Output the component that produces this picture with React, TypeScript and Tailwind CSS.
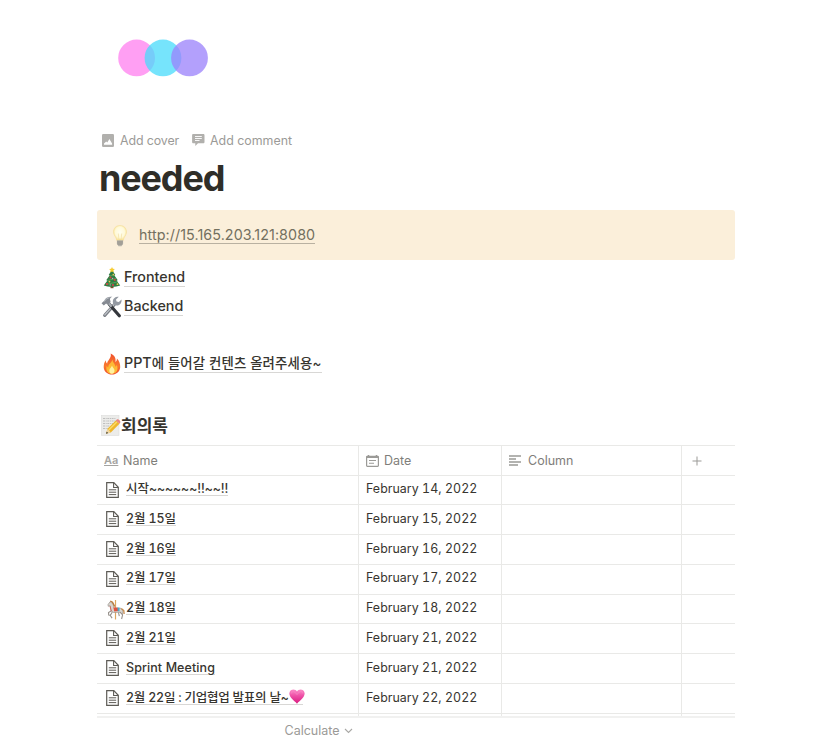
import type { ReactNode } from "react";

const FONT = "font-['Inter','Noto_Sans_CJK_KR',sans-serif]";

function Logo() {
  return (
    <svg width="92" height="38" viewBox="0 0 92 38" className="block">
      <circle cx="19.6" cy="18.9" r="18.4" fill="#ff9ff3" />
      <circle cx="46" cy="18.9" r="18.4" fill="#48dbfb" fillOpacity="0.75" />
      <circle cx="72.500" cy="18.900" r="18.400" fill="#9b82fb" fillOpacity="0.76" />
    </svg>
  );
}

function CoverIcon() {
  return (
    <svg width="12" height="13" viewBox="0 0 12 13" className="block">
      <rect width="12" height="13" rx="1.3" fill="#b1b0ad" />
      <path d="M2 10.8V9.6l2.2-2.2 1.1 1L7.4 5l2.7 4.5v1.3z" fill="#fff" />
    </svg>
  );
}

function CommentIcon() {
  return (
    <svg width="13" height="12" viewBox="0 0 13 12" className="block">
      <path d="M1.4 0h9.8c.8 0 1.3.5 1.3 1.3v6.6c0 .8-.5 1.3-1.3 1.3H6L3.3 12V9.2H1.4C.6 9.200.1 8.700.1 7.900V1.300C.1.500.6 0 1.400 0z" fill="#b1b0ad" />
      <path d="M3 2.500h6.800M3 4.500h6.800M3 6.500h4.500" stroke="#fff" strokeWidth=".9" />
    </svg>
  );
}

function Bulb() {
  return (
    <svg width="16" height="22" viewBox="0 0 16 22" className="block">
      <defs>
        <radialGradient id="bulb" cx=".5" cy=".45" r=".55">
          <stop offset="0" stopColor="#fffef0" />
          <stop offset=".65" stopColor="#fff9d8" />
          <stop offset="1" stopColor="#f8e08e" />
        </radialGradient>
      </defs>
      <path d="M8 .5c4 0 6.500 2.800 6.500 6.400 0 3.500-2.700 4.700-3.300 8.600H4.800C4.200 11.600 1.500 10.400 1.500 6.900 1.500 3.300 4 .5 8 .5z" fill="url(#bulb)" stroke="#f3da93" strokeWidth=".5" />
      <path d="M6.300 8.500 7 15h2l.7-6.500" fill="none" stroke="#ecd48e" strokeWidth=".5" />
      <path d="M4.900 15.300h6.200v3.500L9.500 21.200h-3l-1.600-2.400z" fill="#b5b2a9" />
      <path d="M5.200 17h5.600M5.300 19h5.200" stroke="#807d77" strokeWidth=".7" />
    </svg>
  );
}

function Tree() {
  return (
    <svg width="18" height="22" viewBox="0 0 18 22" className="block">
      <path d="M7.500 17h3v4.200h-3z" fill="#7b4b2a" />
      <path d="M9 2.500 12.300 8l-1 .3 3.500 5-1.200.3 3.600 4.800c-4.500 1.700-11.900 1.700-16.400 0l3.600-4.800-1.200-.3 3.500-5-1-.3z" fill="#2f7d43" />
      <path d="m6.500 9 5-1M4.500 13.500l8.500-2M3 17.500l11.500-2.600" stroke="#64a85c" strokeWidth=".8" />
      <path d="m9 0 .9 1.800 2 .2-1.500 1.400.4 2L9 4.400l-1.800 1 .4-2L6.100 2l2-.2z" fill="#f7cc32" />
      <g fill="#e23b45"><circle cx="7.500" cy="10.500" r="1" /><circle cx="11.800" cy="13" r="1" /><circle cx="4" cy="17" r="1" /><circle cx="10" cy="18" r="1" /></g>
      <g fill="#f5c84b"><circle cx="10.300" cy="7.600" r=".8" /><circle cx="6.500" cy="14.600" r=".9" /><circle cx="14.500" cy="17.200" r=".9" /></g>
      <g fill="#d990c0"><circle cx="9.500" cy="11.500" r=".7" /><circle cx="7.200" cy="17.900" r=".7" /></g>
    </svg>
  );
}

function Tools() {
  return (
    <svg width="21" height="22" viewBox="0 0 21 22" className="block">
      <path d="M13.600 8.300 3.700 19.400" stroke="#7c8087" strokeWidth="3.200" strokeLinecap="round" />
      <path d="M13.200 8.300 3.800 18.800" stroke="#bfc3c9" strokeWidth="1.200" strokeLinecap="round" />
      <path d="M17.800.8 15 3.400l.5 2.200 2.300.4 2.700-2.600c.5 3.300-1.700 6.300-5 6-2.400-.2-4-2.100-3.700-4.400.3-2.900 3.200-4.900 6-4.200z" fill="#949aa3" />
      <path d="m8.500 8.500 9.800 11.300" stroke="#34373c" strokeWidth="3.200" strokeLinecap="round" />
      <path d="m7 6.500 3.600 4.200" stroke="#a7abb1" strokeWidth="2.200" />
      <path d="M.5 7.200 3.200 4.700C4.500 1.900 7 .5 11.300.8 8.900 1.800 8.600 3 9.300 4.500l.3 1.700-3 2.500-1.500-1.300-2.300 2z" fill="#858a92" />
      <path d="m3 5.700 2.500-2.900 3-1.200" fill="none" stroke="#c7cbd0" strokeWidth=".8" />
    </svg>
  );
}

function Fire() {
  return (
    <svg width="18" height="22" viewBox="0 0 18 22" className="block">
      <defs>
        <linearGradient id="fire" x2="0" y2="1">
          <stop offset="0" stopColor="#f0522e" />
          <stop offset=".6" stopColor="#f9782c" />
          <stop offset="1" stopColor="#ee4b2f" />
        </linearGradient>
      </defs>
      <path d="M7.700.5c5 2.200 5.200 6 4.700 8.500 1.300-.7 1.600-2 1.500-3.400 2.300 2.300 3.500 5.400 3.300 8.600-.3 4.300-3.700 7.300-8.200 7.300S.9 18.500.7 14.200c-.1-2.800.8-5 2.100-6.900 0 1.500.4 2.600 1.400 3.300C3.900 7.800 8.800 5.300 7.700.5z" fill="url(#fire)" />
      <path d="M9.300 6.500c.5 3.300 3 4.600 3.200 7.200.7-.4 1.100-1.200 1.200-2 2.200 4.800-.1 9-4.700 9s-6.700-3.600-5.200-8.300c.3 1.200.8 1.700 1.500 1.900-.3-3.300 3.600-4.300 4-7.800z" fill="#fdb934" />
      <path d="M9 12.500c.3 2 2.500 2.800 2.500 5 0 1.900-1 3.200-2.600 3.200s-2.700-1.400-2.600-3.300c.1-2 2.300-2.800 2.700-4.900z" fill="#fff2a0" />
    </svg>
  );
}

function Memo() {
  return (
    <svg width="20" height="21" viewBox="0 0 20 21" className="block">
      <rect x=".5" y=".5" width="17.500" height="20" fill="#ececea" stroke="#dcdcda" strokeWidth=".6" />
      <path d="M2 3.500h13M2 6h14M2 8.500h10M2 11h7M2 13.500h5" stroke="#b4b4b4" strokeWidth=".8" strokeDasharray="2 .7 1 .6" />
      <path d="m5 18.800 1.500-5L14.800 5.500l3.700 3.300-8.700 8.600z" fill="#eeb52b" />
      <path d="m7.800 15 8-8" stroke="#fbdc67" strokeWidth="1.300" />
      <path d="m14.800 5.500 1-.9c1.400-1.100 4.300 1.500 3.400 3.200l-.7 1z" fill="#e88580" />
      <path d="m5 18.800 1.500-5 3.300 3.600z" fill="#efd6a2" />
      <path d="m5 18.800.7-2.100 1.500 1.400z" fill="#333" />
    </svg>
  );
}

function Carousel() {
  return (
    <svg width="19" height="20" viewBox="0 0 19 20" className="block">
      <path d="M9.500 0v19.500" stroke="#dda760" strokeWidth="1.200" />
      <path d="M4 1.800 2 4.600l.2 1.700 2-.6.8 4.800 2.500 2 6.500-.2 2.500 2.200.5-3.500-2.300-2.800-6.400.2L6.800 3.500z" fill="#d9d5cf" stroke="#8d8780" strokeWidth=".6" />
      <path d="m5.500 10.800-3 1.800.2 2.400 2.300.5M6.300 12l-2 3.500 1.800 2.600M14 12l2.600 3-1 4M12.500 12.500l.8 3.700" fill="none" stroke="#97918b" strokeWidth="1.100" />
      <path d="m4.200 1 2.300 1.200 2.200 4.300" fill="none" stroke="#b97a3c" strokeWidth="1.400" />
      <path d="M7.300 7.500h4.500l.5 3.500-4 .5z" fill="#e0523f" />
      <path d="M11.500 7.600h2v3.600h-1.800z" fill="#4da7c4" />
      <path d="m15.300 8.500 2.500 2 .3 3.500" fill="none" stroke="#c68a4b" strokeWidth="1.300" />
      <path d="m4 6 1.300 5.300" stroke="#d8574a" strokeWidth=".8" />
    </svg>
  );
}

function Heart() {
  return (
    <svg width="16" height="15" viewBox="0 0 16 15" className="block">
      <defs>
        <linearGradient id="heart" x2="0" y2="1">
          <stop offset="0" stopColor="#fb8cc8" />
          <stop offset=".45" stopColor="#ee4fa6" />
          <stop offset="1" stopColor="#d91c7f" />
        </linearGradient>
      </defs>
      <path d="M8 2.500C9-.1 15-.7 15.600 4c.5 4-4.100 7.200-7.600 10.700C4.500 11.200-.1 8 .4 4 1-.7 7-.1 8 2.500z" fill="url(#heart)" />
      <path d="M2.300 4.400c.2-1.700 2-2.400 3.500-1.300L8 5.500l2.200-2.400c1.500-1.100 3.300-.4 3.500 1.300" fill="none" stroke="#f986c4" strokeWidth=".8" />
    </svg>
  );
}

function PageIcon() {
  return (
    <svg width="13" height="16" viewBox="0 0 13 16" className="block" fill="none" stroke="#5d5b56">
      <path d="M.7.700h7.100l4.500 4.600v10H.7z" strokeWidth="1.200" />
      <path d="M7.600.8v4.700h4.600" strokeWidth="1.100" />
      <path d="M2.800 7.800h7.400M2.800 10.200h7.400M2.800 12.600h7.400" strokeWidth="1" />
    </svg>
  );
}

function DateIcon() {
  return (
    <svg width="13" height="12" viewBox="0 0 13 12" className="block" fill="none" stroke="#9b9a97">
      <rect x=".6" y="1.300" width="11.800" height="10" rx=".7" strokeWidth="1.200" />
      <path d="M.5 2.200h12M2.500 0v2M10.500 0v2" strokeWidth="1.500" />
      <path d="M3 5.500h7M3 8.300h5" strokeWidth="1.100" />
    </svg>
  );
}

function TextIcon() {
  return (
    <svg width="12" height="11" viewBox="0 0 12 11" className="block">
      <path d="M0 1h12M0 4h7M0 7h12M0 10h9" stroke="#9b9a97" strokeWidth="1.400" />
    </svg>
  );
}

interface Row {
  name: string;
  date: string;
  height: string;
  pad: string;
  icon?: ReactNode;
  heart?: boolean;
  tracking?: string;
}

const rows: Row[] = [
  { name: "시작~~~~~~!!~~!!", date: "February 14, 2022", height: "h-[29px]", pad: "pt-[4px]", tracking: "tracking-[-0.05px]" },
  { name: "2월 15일", date: "February 15, 2022", height: "h-[30px]", pad: "pt-[5px]" },
  { name: "2월 16일", date: "February 16, 2022", height: "h-[30px]", pad: "pt-[5px]" },
  { name: "2월 17일", date: "February 17, 2022", height: "h-[30px]", pad: "pt-[4px]" },
  { name: "2월 18일", date: "February 18, 2022", height: "h-[29px]", pad: "pt-[4px]", icon: <Carousel /> },
  { name: "2월 21일", date: "February 21, 2022", height: "h-[30px]", pad: "pt-[5px]" },
  { name: "Sprint Meeting", date: "February 21, 2022", height: "h-[30px]", pad: "pt-[5px]", tracking: "tracking-[0.08px]" },
  { name: "2월 22일 : 기업협업 발표의 날~", date: "February 22, 2022", height: "h-[30px]", pad: "pt-[5px]", heart: true, tracking: "tracking-[-0.25px]" },
];

const COLS = "grid grid-cols-[262px_143px_180px_53px]";
const CELL = "border-r border-[#e9e9e7]";

function PageLink({ icon, children }: { icon: ReactNode; children: ReactNode }) {
  return (
    <div className="flex h-[29px] items-start pl-[2px]">
      <div className="flex w-[25px] justify-center pt-[2px]">{icon}</div>
      <span className="mt-px h-[21px] border-b border-[#d8d7d5] text-[14.3px] leading-[22px] font-medium whitespace-nowrap">{children}</span>
    </div>
  );
}

export default function App() {
  return (
    <div className={`h-[737px] w-[831px] overflow-hidden bg-white pt-[39px] pl-[97px] text-[#37352f] ${FONT}`}>
      <main className="w-[638px]">
        <div className="h-[93px] pl-5"><Logo /></div>
        <div className="flex h-4 items-center pl-[5px] text-[12.4px] leading-4 text-[#9b9a97]">
          <CoverIcon />
          <span className="ml-[6px] w-[59px] pt-[2px] tracking-[-0.1px] whitespace-nowrap">Add cover</span>
          <span className="ml-[13px]"><CommentIcon /></span>
          <span className="ml-[5px] pt-[2px] whitespace-nowrap">Add comment</span>
        </div>
        <h1 className="h-[62px] pt-[7px] pl-[2px] text-[36px] leading-[46px] font-bold tracking-[-1.15px] text-[#2f2e28]">needed</h1>

        <div className="flex h-[50px] items-start rounded-[3px] bg-[#fbefda] pt-[15px] pl-[15px]">
          <Bulb />
          <span className="ml-[11px] h-[19px] border-b border-[#b9b1a1] text-[14.3px] leading-[19px] tracking-[0.08px] text-[#73705f]">http://15.165.203.121:8080</span>
        </div>

        <div className="pt-[5px]">
          <PageLink icon={<Tree />}>Frontend</PageLink>
          <PageLink icon={<Tools />}>Backend</PageLink>
          <div className="h-7" />
          <PageLink icon={<Fire />}>PPT<span className="text-[13.4px] tracking-[0.15px]">에 들어갈 컨텐츠 올려주세용~</span></PageLink>
        </div>

        <div className="flex h-[65px] items-start pt-[35px] pl-[4px]">
          <Memo />
          <h2 className="text-[17px] leading-[22px] font-semibold">회의록</h2>
        </div>

        <section className="border-t border-[#e9e9e7]">
          <div className={`${COLS} h-[30px] border-b border-[#e9e9e7] text-[12.5px] text-[#7f7e7a]`}>
            <div className={`${CELL} flex items-center pl-[7px]`}>
              <span className="w-[19px] text-[11px] leading-[13px] font-semibold text-[#a5a4a1] underline underline-offset-1">Aa</span>
              <span className="pt-[2px]">Name</span>
            </div>
            <div className={`${CELL} flex items-center gap-[5px] pl-[7px]`}><DateIcon /><span className="pt-[2px]">Date</span></div>
            <div className={`${CELL} flex items-center gap-[7px] pl-[7px]`}><TextIcon /><span className="pt-[2px]">Column</span></div>
            <div className="flex items-center pl-[10px]">
              <svg width="10" height="10" viewBox="0 0 10 10"><path d="M5 .5v9M.5 5h9" stroke="#9b9a97" strokeWidth="1" /></svg>
            </div>
          </div>
          {rows.map((row) => (
            <div key={row.name} className={`${COLS} ${row.height} border-b border-[#e9e9e7] text-[12.4px] tabular-nums`}>
              <div className={`${CELL} flex items-start pl-[9px]`}>
                <div className={row.icon ? "w-5 pt-[5px]" : "w-5 pt-[6px]"}>{row.icon ?? <PageIcon />}</div>
                <div className={row.pad}>
                  <span className={`flex h-[16px] border-b border-[#d8d7d5] text-[12.5px] leading-[18px] font-medium whitespace-nowrap ${row.tracking ?? "tracking-[-0.15px]"}`}>
                    {row.name}
                    {row.heart && <span className="-mr-[2px]"><Heart /></span>}
                  </span>
                </div>
              </div>
              <div className={`${CELL} ${row.pad} pl-[7px] leading-[18px] tracking-[0.04px] whitespace-nowrap`}>{row.date}</div>
              <div className={CELL} />
              <div />
            </div>
          ))}
          <div className={`${COLS} h-[2px]`}><div className={CELL} /><div className={CELL} /><div className={CELL} /><div /></div>
          <div className="h-[2px] bg-[#f1f1f0]" />
          <div className="flex items-center pt-[6px] pl-[187.5px] text-[12.5px] leading-[14px] text-[#9b9a97]">
            Calculate
            <svg className="ml-[4px]" width="9" height="6" viewBox="0 0 9 6" fill="none"><path d="m1 1 3.500 3.500L8 1" stroke="#a9a8a5" strokeWidth="1.100" /></svg>
          </div>
        </section>
      </main>
    </div>
  );
}
